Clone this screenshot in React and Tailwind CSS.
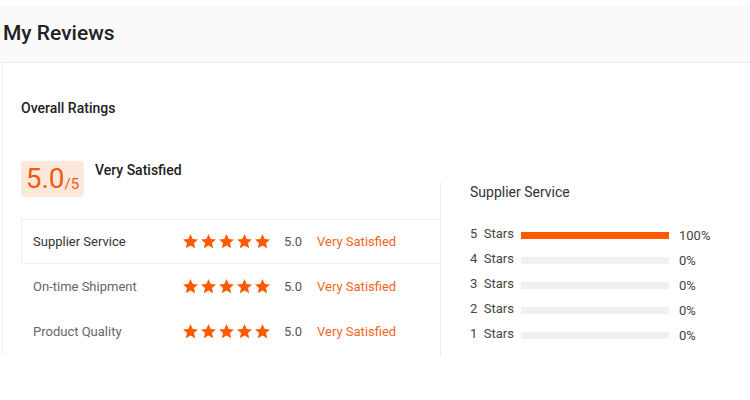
import React from 'react';

const Star = () => (
  <svg viewBox="0 0 24 24" className="w-[17px] h-[17px]" fill="#ff5a00">
    <path d="M12 1.5l3.1 6.9 7.4.7-5.6 5 1.7 7.4L12 17.6l-6.6 3.9 1.7-7.4-5.6-5 7.4-.7z" />
  </svg>
);

const rows = [
  { label: 'Supplier Service', active: true },
  { label: 'On-time Shipment' },
  { label: 'Product Quality' },
];

const dist = [
  { n: 5, pct: 100 },
  { n: 4, pct: 0 },
  { n: 3, pct: 0 },
  { n: 2, pct: 0 },
  { n: 1, pct: 0 },
];

export default function App() {
  return (
    <div className="w-[750px] h-[400px] bg-white pt-[6px]" style={{ fontFamily: 'Roboto, "Liberation Sans", sans-serif' }}>
      {/* header */}
      <div className="h-[57px] bg-[#fafafa] border-b border-[#ececec] flex items-center pl-[3px]">
        <h1 className="text-[21px] font-medium text-[#222] leading-none -mt-[2px]">My Reviews</h1>
      </div>

      <div className="ml-[2px] border-l border-[#eeeeee] h-[292px] pl-[18px] pt-[35px]">
        <h2 className="text-[14px] font-medium text-[#222] leading-5">Overall Ratings</h2>

        <div className="flex mt-[43px]">
          {/* left */}
          <div className="w-[419px]">
            <div className="flex items-start">
              <div className="w-[63px] h-[36px] rounded bg-[#fde9dc] flex items-end justify-center pb-[4px]">
                <span className="text-[28px] leading-none text-[#f05a14]">5.0</span>
                <span className="text-[15px] leading-none text-[#f05a14] mb-[1px]">/5</span>
              </div>
              <span className="ml-[11px] text-[14px] font-medium text-[#222] leading-5 -mt-[1px]">Very Satisfied</span>
            </div>

            <div className="mt-[22px]">
              {rows.map((r) => (
                <div
                  key={r.label}
                  className={`h-[45px] flex items-center text-[13px] ${r.active ? 'border border-r-0 border-[#efefef] bg-white' : 'border border-transparent'}`}
                >
                  <span className={`w-[160px] pl-[11px] ${r.active ? 'text-[#333]' : 'text-[#666]'}`}>{r.label}</span>
                  <div className="flex gap-[1px]">
                    {[0, 1, 2, 3, 4].map((i) => (
                      <Star key={i} />
                    ))}
                  </div>
                  <span className="ml-[13px] text-[#555]">5.0</span>
                  <span className="ml-[15px] text-[#f0661e]">Very Satisfied</span>
                </div>
              ))}
            </div>
          </div>

          {/* right */}
          <div className="mt-[21px] border-l border-[#eeeeee] pl-[29px] h-[174px]">
            <div className="text-[14px] text-[#333] leading-5">Supplier Service</div>
            <div className="mt-[22px] flex flex-col gap-[5px]">
              {dist.map((d) => (
                <div key={d.n} className="h-[20px] flex items-center text-[13px] text-[#444]">
                  <span className="w-[51px]">
                    {d.n}&nbsp;&nbsp;Stars
                  </span>
                  <div className="w-[148px] h-[7px] bg-[#f0f0f4] mt-[3px]">
                    <div className="h-full bg-[#ff5a00]" style={{ width: `${d.pct}%` }} />
                  </div>
                  <span className="ml-[10px] mt-[3px] text-[#444]">{d.pct}%</span>
                </div>
              ))}
            </div>
          </div>
        </div>
      </div>
    </div>
  );
}
